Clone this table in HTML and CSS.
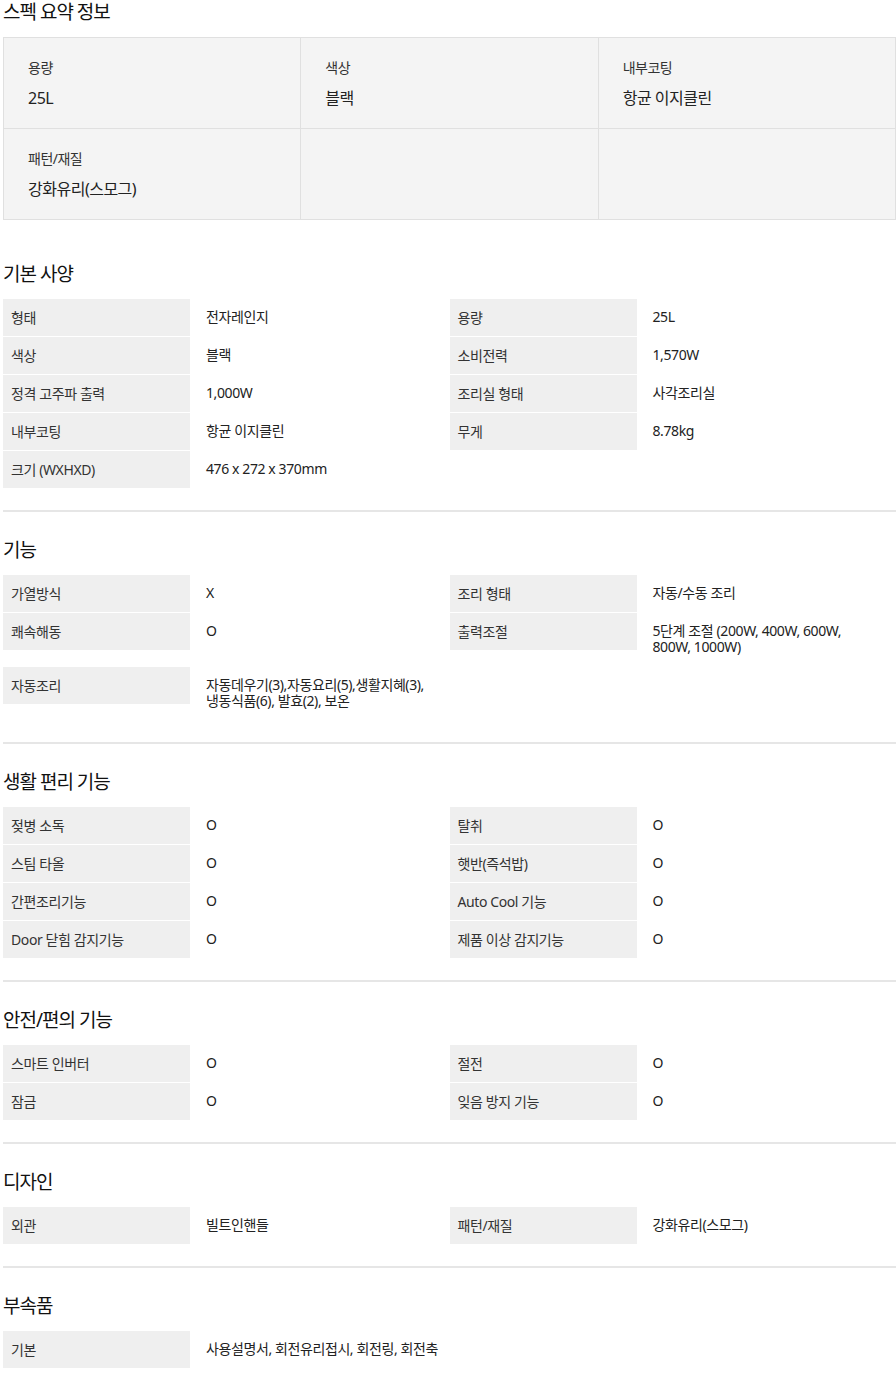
FILE: index.html
```html
<!DOCTYPE html>
<html lang="ko">
<head>
<meta charset="utf-8">
<title>스펙</title>
<link rel="stylesheet" href="styles.css">
</head>
<body>
<div class="page">
  <section class="summary-section">
    <h2 class="section-title">스펙 요약 정보</h2>
    <div class="summary">
      <div class="summary-cell"><div class="summary-label">용량</div><div class="summary-value">25L</div></div>
      <div class="summary-cell"><div class="summary-label">색상</div><div class="summary-value">블랙</div></div>
      <div class="summary-cell"><div class="summary-label">내부코팅</div><div class="summary-value">항균 이지클린</div></div>
      <div class="summary-cell"><div class="summary-label">패턴/재질</div><div class="summary-value">강화유리(스모그)</div></div>
      <div class="summary-cell"></div>
      <div class="summary-cell"></div>
    </div>
  </section>

  <section class="spec-section">
    <h2 class="section-title">기본 사양</h2>
    <div class="spec-grid">
      <div class="spec-item"><div class="spec-label">형태</div><div class="spec-value">전자레인지</div></div>
      <div class="spec-item"><div class="spec-label">용량</div><div class="spec-value">25L</div></div>
      <div class="spec-item"><div class="spec-label">색상</div><div class="spec-value">블랙</div></div>
      <div class="spec-item"><div class="spec-label">소비전력</div><div class="spec-value">1,570W</div></div>
      <div class="spec-item"><div class="spec-label">정격 고주파 출력</div><div class="spec-value">1,000W</div></div>
      <div class="spec-item"><div class="spec-label">조리실 형태</div><div class="spec-value">사각조리실</div></div>
      <div class="spec-item"><div class="spec-label">내부코팅</div><div class="spec-value">항균 이지클린</div></div>
      <div class="spec-item"><div class="spec-label">무게</div><div class="spec-value">8.78kg</div></div>
      <div class="spec-item"><div class="spec-label">크기 (WXHXD)</div><div class="spec-value">476 x 272 x 370mm</div></div>
    </div>
  </section>

  <section class="spec-section">
    <h2 class="section-title">기능</h2>
    <div class="spec-grid">
      <div class="spec-item"><div class="spec-label">가열방식</div><div class="spec-value">X</div></div>
      <div class="spec-item"><div class="spec-label">조리 형태</div><div class="spec-value">자동/수동 조리</div></div>
      <div class="spec-item"><div class="spec-label">쾌속해동</div><div class="spec-value">O</div></div>
      <div class="spec-item"><div class="spec-label">출력조절</div><div class="spec-value">5단계 조절 (200W, 400W, 600W, 800W, 1000W)</div></div>
      <div class="spec-item"><div class="spec-label">자동조리</div><div class="spec-value">자동데우기(3),자동요리(5),생활지혜(3), 냉동식품(6), 발효(2), 보온</div></div>
    </div>
  </section>

  <section class="spec-section">
    <h2 class="section-title">생활 편리 기능</h2>
    <div class="spec-grid">
      <div class="spec-item"><div class="spec-label">젖병 소독</div><div class="spec-value">O</div></div>
      <div class="spec-item"><div class="spec-label">탈취</div><div class="spec-value">O</div></div>
      <div class="spec-item"><div class="spec-label">스팀 타올</div><div class="spec-value">O</div></div>
      <div class="spec-item"><div class="spec-label">햇반(즉석밥)</div><div class="spec-value">O</div></div>
      <div class="spec-item"><div class="spec-label">간편조리기능</div><div class="spec-value">O</div></div>
      <div class="spec-item"><div class="spec-label">Auto Cool 기능</div><div class="spec-value">O</div></div>
      <div class="spec-item"><div class="spec-label">Door 닫힘 감지기능</div><div class="spec-value">O</div></div>
      <div class="spec-item"><div class="spec-label">제품 이상 감지기능</div><div class="spec-value">O</div></div>
    </div>
  </section>

  <section class="spec-section">
    <h2 class="section-title">안전/편의 기능</h2>
    <div class="spec-grid">
      <div class="spec-item"><div class="spec-label">스마트 인버터</div><div class="spec-value">O</div></div>
      <div class="spec-item"><div class="spec-label">절전</div><div class="spec-value">O</div></div>
      <div class="spec-item"><div class="spec-label">잠금</div><div class="spec-value">O</div></div>
      <div class="spec-item"><div class="spec-label">잊음 방지 기능</div><div class="spec-value">O</div></div>
    </div>
  </section>

  <section class="spec-section">
    <h2 class="section-title">디자인</h2>
    <div class="spec-grid">
      <div class="spec-item"><div class="spec-label">외관</div><div class="spec-value">빌트인핸들</div></div>
      <div class="spec-item"><div class="spec-label">패턴/재질</div><div class="spec-value">강화유리(스모그)</div></div>
    </div>
  </section>

  <section class="spec-section spec-section-last">
    <h2 class="section-title">부속품</h2>
    <div class="spec-grid">
      <div class="spec-item"><div class="spec-label">기본</div><div class="spec-value spec-value-wide">사용설명서, 회전유리접시, 회전링, 회전축</div></div>
    </div>
  </section>
</div>
</body>
</html>
```

FILE: styles.css
```css
* {
  box-sizing: border-box;
}

html, body {
  margin: 0;
  padding: 0;
  background: #ffffff;
}

body {
  font-family: "Noto Sans", "Noto Sans CJK KR", sans-serif;
  color: #222222;
}

.page {
  width: 896px;
  padding-left: 3px;
}

.section-title {
  margin: 0 0 12px;
  font-size: 19px;
  line-height: 25px;
  font-weight: 400;
  letter-spacing: -1px;
  color: #111111;
}

/* summary */
.summary-section {
  margin-bottom: 42px;
}

.summary {
  display: grid;
  grid-template-columns: repeat(3, 1fr);
  gap: 1px;
  padding: 1px;
  background: #e0e0e0;
}

.summary-cell {
  background: #f4f4f4;
  height: 90px;
  padding: 20px 24px 0;
}

.summary-label {
  font-size: 14px;
  line-height: 20px;
  letter-spacing: -0.5px;
  color: #333333;
}

.summary-value {
  margin-top: 8px;
  font-size: 16px;
  line-height: 24px;
  letter-spacing: -0.5px;
  color: #222222;
}

/* spec tables */
.spec-section {
  padding-bottom: 22px;
  border-bottom: 2px solid #e6e6e6;
  margin-bottom: 26px;
}

.spec-section-last {
  border-bottom: none;
  margin-bottom: 0;
}

.spec-grid {
  display: grid;
  grid-template-columns: 1fr 1fr;
  row-gap: 1px;
}

.spec-item {
  display: flex;
  align-items: flex-start;
  gap: 16px;
  font-size: 14px;
  letter-spacing: -0.4px;
}

.spec-label {
  flex: 0 0 187px;
  background: #efefef;
  padding: 10px 8px;
  line-height: 17px;
  color: #333333;
}

.spec-value {
  flex: 1 1 auto;
  min-width: 0;
  padding: 10px 20px 11px 0;
  line-height: 16px;
  color: #222222;
}

.spec-value-wide {
  padding-right: 0;
}
```
